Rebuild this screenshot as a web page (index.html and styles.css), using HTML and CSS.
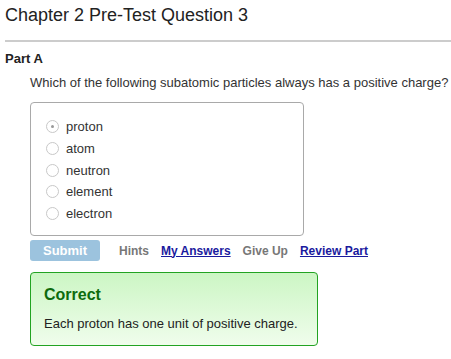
FILE: index.html
```html
<!DOCTYPE html>
<html>
<head>
<meta charset="utf-8">
<link rel="stylesheet" href="styles.css">
</head>
<body>
<h1 class="title">Chapter 2 Pre-Test Question 3</h1>
<div class="rule"></div>
<h2 class="part">Part A</h2>
<div class="content">
  <p class="question">Which of the following subatomic particles always has a positive charge?</p>
  <div class="choices">
    <label class="choice"><span class="radio checked"><span class="dot"></span></span>proton</label>
    <label class="choice"><span class="radio"></span>atom</label>
    <label class="choice"><span class="radio"></span>neutron</label>
    <label class="choice"><span class="radio"></span>element</label>
    <label class="choice"><span class="radio"></span>electron</label>
  </div>
  <div class="actions">
    <span class="submit">Submit</span>
    <span class="act gray hints">Hints</span>
    <a class="act link" href="#">My Answers</a>
    <span class="act gray">Give Up</span>
    <a class="act link" href="#">Review Part</a>
  </div>
  <div class="feedback">
    <div class="fb-title">Correct</div>
    <div class="fb-text">Each proton has one unit of positive charge.</div>
  </div>
</div>
</body>
</html>
```
FILE: styles.css
```css
html, body { margin: 0; padding: 0; background: #fff; }
body { font-family: Arial, "Liberation Sans", Helvetica, sans-serif; color: #222; padding: 0 0 0 5px; }
.title { font-size: 18px; font-weight: normal; margin: 0; padding-top: 5px; line-height: 21px; color: #222; }
.rule { height: 2px; background: #cccccc; margin-top: 14px; }
.part { font-size: 13px; font-weight: bold; margin: 9px 0 0 0; line-height: 15px; color: #222; }
.content { padding-left: 25px; }
.question { font-size: 13px; color: #333; margin: 9px 0 0 0; line-height: 15px; }
.choices { width: 274px; height: 134px; border: 1px solid #a9a9a9; border-radius: 4px; margin-top: 12px; padding: 13px 0 0 15px; box-sizing: border-box; }
.choice { display: flex; align-items: center; font-size: 13px; color: #333; height: 21.7px; }
.radio { width: 11px; height: 11px; border: 1px solid #c8c8c8; border-radius: 50%; margin-right: 7px; display: flex; align-items: center; justify-content: center; background: #fff; }
.dot { width: 3px; height: 3px; border-radius: 50%; background: #999; }
.actions { display: flex; align-items: center; margin-top: 4px; height: 21px; }
.submit { width: 70px; height: 21px; background: #9cc3de; color: #fff; font-weight: bold; font-size: 13px; border-radius: 3px; display: flex; align-items: center; justify-content: center; }
.act { font-size: 12px; font-weight: bold; margin-left: 12px; }
.hints { margin-left: 19px; }
.gray { color: #777; }
.link { color: #1a1a9e; text-decoration: underline; }
.feedback { width: 288px; height: 74px; box-sizing: border-box; margin-top: 11px; border: 1px solid #22a322; border-radius: 4px; background: linear-gradient(#ccf6c4, #f0fdec); padding: 13px 0 0 13px; }
.fb-title { font-size: 16px; font-weight: bold; color: #0d6b0d; line-height: 18px; }
.fb-text { font-size: 13px; color: #222; margin-top: 12px; line-height: 15px; }
```
